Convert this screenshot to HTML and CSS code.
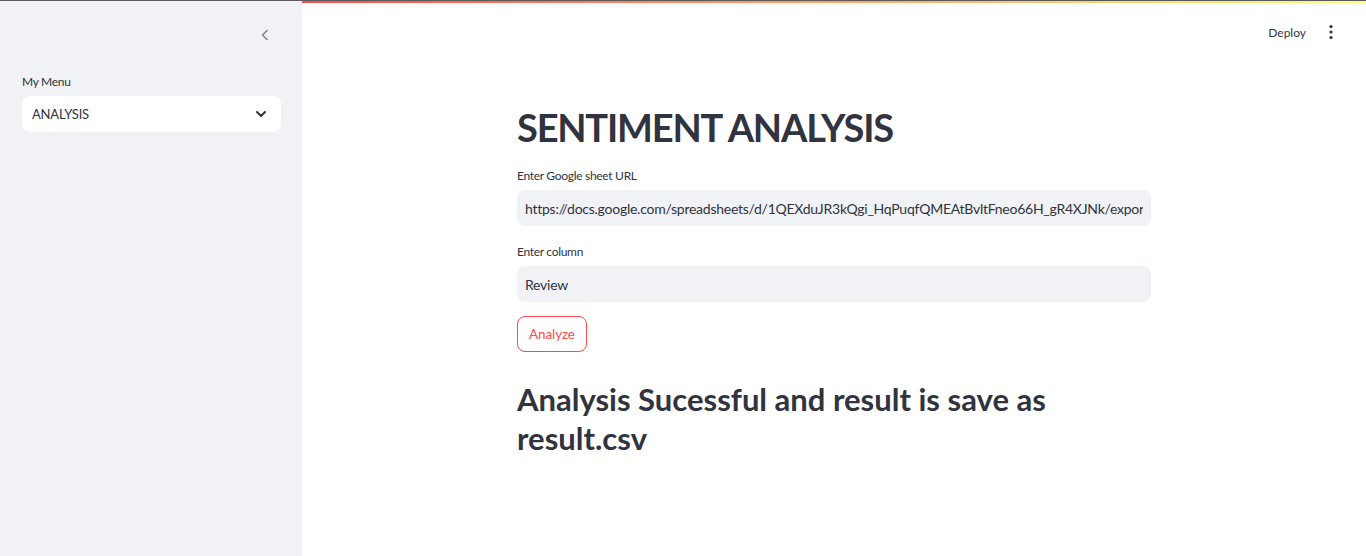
FILE: index.html
```html
<!DOCTYPE html>
<html lang="en">
<head>
<meta charset="utf-8">
<title>Sentiment Analysis</title>
<link rel="stylesheet" href="styles.css">
</head>
<body>
<div class="topline"></div>
<div class="app">
  <aside class="sidebar">
    <div class="sb-head">
      <button class="collapse" aria-label="Collapse sidebar">
        <svg width="16" height="16" viewBox="0 0 16 16"><path d="M10 3.5 L5.5 8 L10 12.5" fill="none" stroke="#808495" stroke-width="1.6" stroke-linecap="round" stroke-linejoin="round"/></svg>
      </button>
    </div>
    <div class="sb-body">
      <label class="label sb-label">My Menu</label>
      <div class="select">
        <span>ANALYSIS</span>
        <svg width="16" height="16" viewBox="0 0 16 16"><path d="M4 6 L8 10 L12 6" fill="none" stroke="#31333f" stroke-width="2" stroke-linecap="round" stroke-linejoin="round"/></svg>
      </div>
    </div>
  </aside>
  <main class="main">
    <div class="decoration"></div>
    <header class="header">
      <span class="deploy">Deploy</span>
      <svg class="kebab" width="16" height="16" viewBox="0 0 16 16"><circle cx="8" cy="2.5" r="1.6" fill="#31333f"/><circle cx="8" cy="8" r="1.6" fill="#31333f"/><circle cx="8" cy="13.5" r="1.6" fill="#31333f"/></svg>
    </header>
    <section class="content">
      <h1 class="title">SENTIMENT ANALYSIS</h1>
      <div class="field field-first">
        <label class="label">Enter Google sheet URL</label>
        <div class="input"><span class="value">https://docs.google.com/spreadsheets/d/1QEXduJR3kQgi_HqPuqfQMEAtBvltFneo66H_gR4XJNk/export?format=csv</span></div>
      </div>
      <div class="field">
        <label class="label">Enter column</label>
        <div class="input"><span class="value">Review</span></div>
      </div>
      <button class="btn">Analyze</button>
      <h2 class="result">Analysis Sucessful and result is save as result.csv</h2>
    </section>
  </main>
</div>
</body>
</html>
```
FILE: styles.css
```css
* { box-sizing: border-box; }
html, body { margin: 0; padding: 0; height: 100%; }
body {
  font-family: "Source Sans Pro", Lato, "Liberation Sans", sans-serif;
  color: #31333f;
  background: #fff;
  overflow: hidden;
}
.topline { height: 1px; background: #5a5a5a; }
.app { display: flex; height: 555px; }
.sidebar {
  width: 302px;
  flex: none;
  background: #f0f2f6;
}
.sb-head {
  height: 70px;
  display: flex;
  justify-content: flex-end;
  align-items: flex-start;
  padding: 26px 29px 0 0;
}
.collapse {
  border: 0; background: none; padding: 0; width: 16px; height: 16px;
  display: flex;
}
.sb-body { padding: 3px 21px 0 22px; }
.label {
  display: block;
  font-size: 12px;
  letter-spacing: -0.3px;
  line-height: 16px;
  color: #31333f;
  margin-bottom: 6px;
}
.select {
  height: 36px;
  background: #fff;
  border-radius: 8px;
  display: flex;
  align-items: center;
  justify-content: space-between;
  padding: 0 12px 0 10px;
  font-size: 13px;
  letter-spacing: -0.2px;
}
.main { flex: 1; position: relative; }
.decoration {
  height: 2px;
  background: linear-gradient(90deg, rgb(255, 75, 75), rgb(255, 253, 128));
}
.header {
  height: 58px;
  display: flex;
  justify-content: flex-end;
  align-items: center;
  padding: 0 27px 0 0;
  gap: 17px;
}
.deploy { font-size: 12px; }
.content {
  width: 634px;
  margin-left: 215px;
}
.title {
  font-size: 38px;
  font-weight: 700;
  line-height: 48px;
  letter-spacing: -1.2px;
  margin: 42px 0 17px;
}
.field { margin-bottom: 14px; }
.field-first { margin-bottom: 18px; }
.input {
  height: 36px;
  background: #f0f2f6;
  border-radius: 8px;
  padding: 0 8px;
  font-size: 14px;
  letter-spacing: -0.25px;
  display: flex;
  align-items: center;
}
.value {
  display: block;
  flex: 1;
  min-width: 0;
  white-space: nowrap;
  overflow: hidden;
}
.btn {
  height: 36px;
  padding: 0 11px;
  border: 1px solid rgb(255, 75, 75);
  border-radius: 8px;
  background: #fff;
  color: rgb(255, 75, 75);
  font-family: inherit;
  font-size: 13.5px;
  letter-spacing: -0.1px;
}
.result {
  font-size: 31px;
  font-weight: 700;
  line-height: 39px;
  margin: 28px 0 0;
  width: 560px;
}
```
